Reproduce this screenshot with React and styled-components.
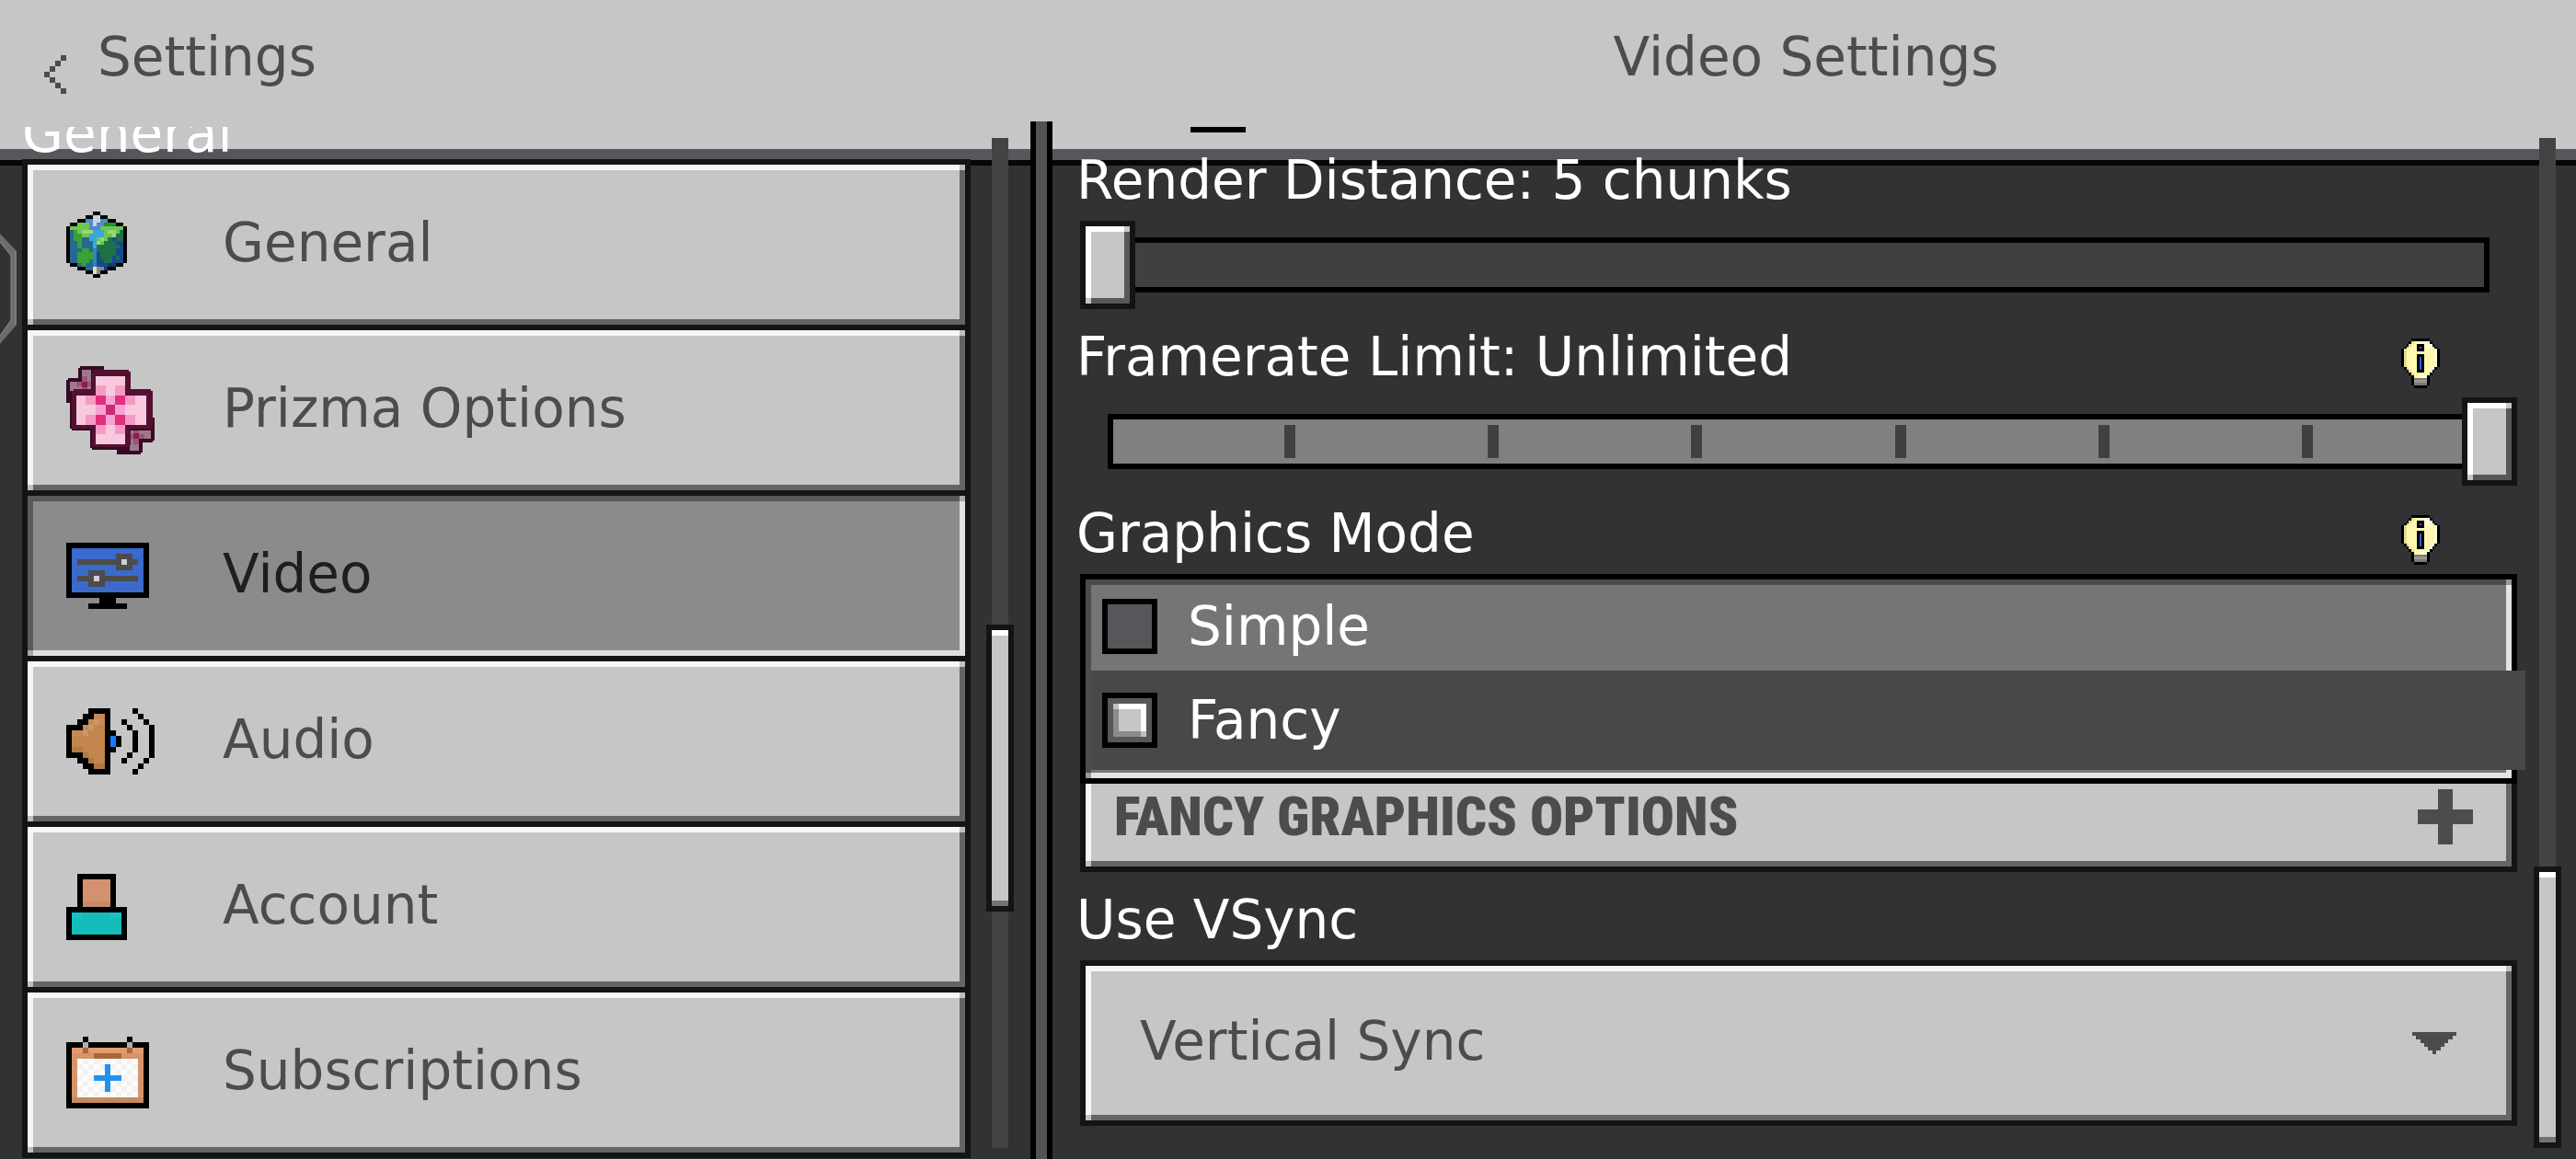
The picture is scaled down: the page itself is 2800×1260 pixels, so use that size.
import React, { useState } from "react"
import styled, { createGlobalStyle, css } from "styled-components"


const GlobalStyle = createGlobalStyle`
    * {
        box-sizing: border-box;
    }

    body {
        margin: 0;
        background: #313233;
        color: #ffffff;
        font-family: "DejaVu Sans", Verdana, sans-serif;
        font-size: 58px;
        line-height: 68px;
    }

    button, input, select {
        margin: 0;
        padding: 0;
        border: 0;
        border-radius: 0;
        background: none;
        color: inherit;
        font: inherit;
        text-align: left;
        appearance: none;
    }
`

// flat face with a hard 6px bevel and blended corners
const bevel = (face, light, dark, corner) => css`
    background:
        linear-gradient(${corner}, ${corner}) 0 100% / 6px 6px no-repeat,
        linear-gradient(${corner}, ${corner}) 100% 0 / 6px 6px no-repeat,
        linear-gradient(${light}, ${light}) 0 0 / 6px 100% no-repeat,
        linear-gradient(${dark}, ${dark}) 100% 0 / 6px 100% no-repeat,
        linear-gradient(${light}, ${light}) 0 0 / 100% 6px no-repeat,
        linear-gradient(${dark}, ${dark}) 0 100% / 100% 6px no-repeat,
        ${face};
`

const Page = styled.div`
    min-height: 100vh;
    display: flex;
    flex-direction: column;
    overflow: hidden;
`

const Header = styled.header`
    display: flex;
    align-items: flex-start;
    padding: 28px 0 72px;
    background: linear-gradient(#c6c8ca, #c6c8ca) 0 calc(100% - 12px) / 100% 6px no-repeat, #c6c6c6;
    box-shadow: inset 0 -12px #58565a;
    border-bottom: 6px solid #060606;
    color: #4c4c4c;
`

const HeaderLeft = styled.div`
    width: 40%;
    display: flex;
    align-items: flex-start;
    gap: 34px;
    padding-left: 48px;
`

const BackButton = styled.button`
    display: flex;
    padding-top: 32px;
`

const Title = styled.h1`
    margin: 0;
    font-size: 58px;
    font-weight: normal;
`

const PageTitle = styled(Title)`
    flex: 1;
    padding-left: 6px;
    text-align: center;
`

// the scrolled panes run up over the lower edge of the header
const Body = styled.main`
    flex: 1;
    display: flex;
    margin-top: -48px;
`

const NavPane = styled.div`
    width: 40%;
    display: flex;
    gap: 17px;
    padding: 6px 18px 0 24px;
`

const NavColumn = styled.nav`
    flex: 1;
`

const SectionTitle = styled.div`
    display: flex;
    align-items: flex-end;
    height: 35px;
    padding-bottom: 4px;
    overflow: hidden;
    line-height: 48px;
`

const NavList = styled.div`
    display: flex;
    flex-direction: column;
    gap: 6px;
    padding: 6px;
    background: #141414;
`

const NavItem = styled.button`
    display: flex;
    align-items: center;
    height: 174px;
    padding-left: 42px;
    color: ${props => props.$active ? "#1e1e1e" : "#4c4c4c"};
    ${props => props.$active
        ? bevel("#8b8b8b", "#595959", "#e0e0e0", "#aaaaaa")
        : bevel("#c6c6c6", "#f7f7f7", "#656565", "#c0c0c0")}
`

const NavIcon = styled.span`
    display: flex;
    width: 170px;
`

const NavText = styled.span`
    padding-bottom: 4px;
`

const Divider = styled.div`
    width: 24px;
    background: #525154;
    border: solid #000000;
    border-width: 0 6px;
`

const ScrollBar = styled.div`
    display: grid;
    grid-template-rows: ${props => props.$rows};
    width: 30px;
    margin: 12px 0;
    background: linear-gradient(#434343, #434343) 50% 0 / 18px 100% no-repeat;
`

const ScrollThumb = styled.div`
    grid-row: 2;
    border: 6px solid #141414;
    background: #c6c6c6;
    box-shadow: inset 0 6px #ffffff, inset 0 -6px #737373;
`

const SettingsPane = styled.div`
    flex: 1;
    display: flex;
    gap: 18px;
    padding: 6px 16px 0 30px;
`

const Settings = styled.div`
    flex: 1;
`

const ToggleEdge = styled.div`
    width: 60px;
    height: 6px;
    margin-left: 120px;
    background: #000000;
`

const SettingRow = styled.div`
    display: flex;
    align-items: flex-end;
    justify-content: space-between;
    height: 96px;
    padding: 18px 84px 10px 0;
    margin-left: -4px;
`

const InfoButton = styled.button`
    display: flex;
`

const SliderBox = styled.div`
    display: grid;
    align-items: center;

    > * {
        grid-area: 1 / 1;
    }
`

const Slider = styled.input`
    width: 100%;
    height: 96px;
    background:
        linear-gradient(${props => props.$fill}, ${props => props.$fill}) 36px 24px / calc(100% - 72px) 48px no-repeat,
        linear-gradient(#000000, #000000) 30px 18px / calc(100% - 60px) 60px no-repeat;

    &::-webkit-slider-thumb {
        appearance: none;
        width: 60px;
        height: 96px;
        border: 6px solid #141414;
        ${bevel("#c6c6c6", "#ffffff", "#58565a", "#c6c6c6")}
        background-origin: padding-box;
        background-clip: padding-box;
    }
`

const Ticks = styled.div`
    display: flex;
    justify-content: space-between;
    margin: 0 222px;
    pointer-events: none;
`

const Tick = styled.span`
    width: 12px;
    height: 36px;
    background: #404040;
`

const RadioGroup = styled.div`
    padding: 6px 6px 9px;
    border: 6px solid #000000;
    ${bevel("#757575", "#4d4b4d", "#e3e3e3", "#999999")}
    background-origin: padding-box;
`

const RadioRow = styled.label`
    display: flex;
    align-items: center;
    gap: 33px;
    padding: ${props => props.$active ? "20px 12px" : "11px 12px 14px"};
    margin-right: ${props => props.$active ? "-21px" : "0"};
    background: ${props => props.$active ? "#4a474a" : "transparent"};
`

const Radio = styled.input`
    width: 60px;
    height: 60px;
    padding: 6px;
    border: 6px solid #000000;
    background: #58565a;

    &:checked {
        background:
            linear-gradient(#c0c0c0, #c0c0c0) 0 0 / 6px 6px no-repeat,
            linear-gradient(#c0c0c0, #c0c0c0) 100% 100% / 6px 6px no-repeat,
            linear-gradient(#ffffff, #ffffff) 0 0 / 100% 6px no-repeat,
            linear-gradient(#ffffff, #ffffff) 100% 0 / 6px 100% no-repeat,
            linear-gradient(#8b8b8b, #8b8b8b) 0 0 / 6px 100% no-repeat,
            linear-gradient(#8b8b8b, #8b8b8b) 0 100% / 100% 6px no-repeat,
            linear-gradient(#c6c6c6, #c6c6c6) 0 0 / 100% 100% no-repeat;
        background-origin: content-box;
        background-color: #58565a;
    }
`

const ExpandButton = styled.button`
    display: flex;
    align-items: center;
    justify-content: space-between;
    width: 100%;
    height: 96px;
    padding: 0 42px 18px 31px;
    border: solid #141414;
    border-width: 0 6px 6px;
    background:
        linear-gradient(#c0c0c0, #c0c0c0) 0 100% / 6px 6px no-repeat,
        linear-gradient(#f7f7f7, #f7f7f7) 0 0 / 6px 100% no-repeat,
        linear-gradient(#656565, #656565) 100% 0 / 6px 100% no-repeat,
        linear-gradient(#656565, #656565) 0 100% / 100% 6px no-repeat,
        #c6c6c6;
    background-origin: padding-box;
    color: #4c4c4c;
    font-family: "Roboto Condensed", "Liberation Sans Narrow", "DejaVu Sans Condensed", sans-serif;
    font-size: 60px;
    font-weight: 900;
`

const SelectBox = styled.div`
    display: grid;
    align-items: center;
    color: #4c4c4c;

    > * {
        grid-area: 1 / 1;
    }

    > svg {
        justify-self: end;
        margin-right: 66px;
        pointer-events: none;
    }
`

const Select = styled.select`
    width: 100%;
    height: 180px;
    padding: 0 120px 4px 59px;
    border: 6px solid #141414;
    ${bevel("#c6c6c6", "#f7f7f7", "#656565", "#c0c0c0")}
    background-origin: padding-box;
`

const EdgeHandle = styled.svg`
    position: absolute;
    left: 0;
    top: 252px;
`


// each character is one cell, looked up in the palette
const PixelArt = ({ rows, palette, width, height }) => (
    <svg
        width={width}
        height={height}
        viewBox={`0 0 ${rows[0].length} ${rows.length}`}
        preserveAspectRatio="none"
        shapeRendering="crispEdges"
        aria-hidden="true"
    >
        {rows.map((row, y) => row.split("").map((cell, x) => (
            cell !== " " && <rect key={`${x}-${y}`} x={x} y={y} width="1" height="1" fill={palette[cell]} />
        )))}
    </svg>
)

const globe = {
    width: 66,
    height: 72,
    palette: {
        K: "#000000", W: "#c4d8d6", B: "#5488d0", L: "#6cc850", P: "#9cd872", G: "#38a238", D: "#28902c",
        T: "#26688f", C: "#3aa5e0", S: "#2f86b8", F: "#1e7048", N: "#164a8c", M: "#0e3c78", w: "#e0dcd8", g: "#8c8888",
    },
    rows: [
        "       KK       ",
        "     KKWWKK     ",
        "   KKBBWWBBKK   ",
        " KKLLLBWBBDDDKK ",
        "KLLLLLBBBLLLLLLK",
        "KTGLPPPCCCLPPLFK",
        "KTGGLLCCCCLLPFFK",
        "KTGGTTCCLPLFNFFK",
        "KTTGTTTCPLFFFNNK",
        "KTTGTTTCFFFFFFNK",
        "KTTTGGTSFFFFFNNK",
        "KTTGGGGSNFFFFNNK",
        "KTTGGGGSNFFFNFNK",
        "KTTGGGTSNNFFNNNK",
        " KKTGTTSNNNMMKK ",
        "   KKTTwggMKK   ",
        "     KKwgKK     ",
        "       KK       ",
    ],
}

const monitor = {
    width: 90,
    height: 72,
    palette: { K: "#000000", B: "#3a6acb", G: "#4c4c4c", W: "#d0d0d0" },
    rows: [
        "KKKKKKKKKKKKKKK",
        "KBBBBBBBBBBBBBK",
        "KBBBBBBBBGGGBBK",
        "KBGGGGGGGGWGGBK",
        "KBBBBBBBBGGGBBK",
        "KBBBGGGBBBBBBBK",
        "KBGGGWGGGGGGGBK",
        "KBBBGGGBBBBBBBK",
        "KBBBBBBBBBBBBBK",
        "KKKKKKKKKKKKKKK",
        "      KKK      ",
        "    KKKKKKK    ",
    ],
}

const speaker = {
    width: 96,
    height: 72,
    palette: { K: "#000000", L: "#c68a58", P: "#cc9669", T: "#c2854c", D: "#b07a46", B: "#1a78ff" },
    rows: [
        "    KKKK    K   ",
        "   KKLLK     K  ",
        "  KKLPLK  K   K ",
        "KKKLPTTK   K   K",
        "KLLPTTTKK   K  K",
        "KTTTTTTKBK  K  K",
        "KTTTTTTKBK  K  K",
        "KDDTTTTKK   K  K",
        "KKKDTTTK   K   K",
        "  KKDTTK  K   K ",
        "   KKDDK     K  ",
        "    KKKK    K   ",
    ],
}

const person = {
    width: 66,
    height: 72,
    palette: { K: "#000000", S: "#d4916e", s: "#c88a68", T: "#16c4c2", t: "#14bcba" },
    rows: [
        "  KKKKKKK  ",
        "  KSSSSSK  ",
        "  KSSSSSK  ",
        "  KSSSSSK  ",
        "  KSSSSSK  ",
        "  KsssssK  ",
        "KKKKKKKKKKK",
        "KTTtttttTTK",
        "KtttttttttK",
        "KtttttttttK",
        "KtttttttttK",
        "KKKKKKKKKKK",
    ],
}

const calendar = {
    width: 90,
    height: 78,
    palette: {
        K: "#000000", g: "#b0aeac", L: "#e49c6c", b: "#a8683a", O: "#d6946a", o: "#c68a62",
        W: "#fcfcfc", w: "#f2f2f2", B: "#2490f0",
    },
    rows: [
        "   K       K   ",
        "KKKgKKKKKKKgKKK",
        "KLLbLLLLLLLbLLK",
        "KOOOObbbbbOOOOK",
        "KOWwWwWwWwWwWOK",
        "KOwWwWwBwWwWwOK",
        "KOWwWwWBWwWwWOK",
        "KOwWwBBBBBwWwOK",
        "KOWwWwWBWwWwWOK",
        "KOwWwWwBwWwWwOK",
        "KOWwWwWwWwWwWOK",
        "KoooooooooooooK",
        "KKKKKKKKKKKKKKK",
    ],
}

const bulb = {
    width: 42,
    height: 54,
    palette: {
        K: "#000000", Y: "#fff9b0", D: "#e6dc8c", W: "#fffde0", B: "#3a5acb", g: "#9a9696", d: "#7c7a70",
    },
    rows: [
        "    KKKKKKK    ",
        "   KDYYYYWWK   ",
        "  KDYYKKKWWWK  ",
        " KDYYYKBKWWYYK ",
        "KDYYYYKKKYYYYWK",
        "KDYYYYYYYYYYYWK",
        "KDYYYYKKKYYYYWK",
        "KDYYYYKBKYYYYWK",
        "KDYYYYKBKYYYYWK",
        "KDYYYYKBKYYYYWK",
        "KDYYYYKBKYYYYWK",
        " KDYYYKBKYYYWK ",
        "  KDYYKKKYYWK  ",
        "   KDYYYYYWK   ",
        "    KYYYWWK    ",
        "    KdddddK    ",
        "    KgggggK    ",
        "    KdddddK    ",
        "     KKKKK     ",
    ],
}

const chevron = {
    width: 24,
    height: 42,
    palette: { K: "#4c4c4c" },
    rows: ["   K", "  K ", " K  ", "K   ", " K  ", "  K ", "   K"],
}

const Petal = () => (
    <>
        <path d="M13 2h2V0h26v40H0V15h2v-2h11z" fill="#350a22" />
        <path d="M17 4h10v23H4V17h13z" fill="#9c7a8c" />
        <path d="M17 11h6v6h-6zM11 17h6v5h-6zM23 17h4v5h-4zM17 22h6v5h-6z" fill="#9c5478" />
        <path d="M17 17h6v6h-6z" fill="#8a1e52" />
    </>
)

const Blossom = () => (
    <svg width="96" height="96" viewBox="0 0 96 96" shapeRendering="crispEdges" aria-hidden="true">
        <Petal />
        <g transform="rotate(180 48 48)"><Petal /></g>
        <path d="M26 25h42v66H28v-2h-2zM4 27h88v43H6v-2H4z" fill="#350a22" />
        <path d="M28 6h2V4h38v2h2v19h22v2h2v39h-2v2H70v18h-2v2H28V68H6V27h2v-2h20z" fill="#541033" />
        <path d="M32 11h32v21h23v32H64v21H32V64H11V32h21z" fill="#fac8dc" />
        <path d="M32 21h11v11H32zM53 21h11v11H53zM21 32h11v10H21zM21 53h11v11H21zM64 32h11v10H64zM64 53h11v11H64zM32 64h11v10H32zM53 64h11v10H53z" fill="#f59ac6" />
        <path d="M43 32h10v32H43zM32 42h32v11H32z" fill="#f6a2d4" />
        <path d="M32 32h11v10H32zM53 32h11v10H53zM32 53h11v11H32zM53 53h11v11H53z" fill="#e0307a" />
        <path d="M43 42h10v11H43z" fill="#c82c6c" />
    </svg>
)

const navItems = [
    { name: "General", icon: <PixelArt {...globe} /> },
    { name: "Prizma Options", icon: <Blossom /> },
    { name: "Video", icon: <PixelArt {...monitor} /> },
    { name: "Audio", icon: <PixelArt {...speaker} /> },
    { name: "Account", icon: <PixelArt {...person} /> },
    { name: "Subscriptions", icon: <PixelArt {...calendar} /> },
]

const App = () => {
    const [section, setSection] = useState("Video")
    const [distance, setDistance] = useState(5)
    const [framerate, setFramerate] = useState(7)
    const [mode, setMode] = useState("Fancy")

    return (
        <Page>
            <GlobalStyle />
            <Header>
                <HeaderLeft>
                    <BackButton aria-label="Back"><PixelArt {...chevron} /></BackButton>
                    <Title as="div">Settings</Title>
                </HeaderLeft>
                <PageTitle>{section} Settings</PageTitle>
            </Header>

            <Body>
                <NavPane>
                    <NavColumn>
                        <SectionTitle>General</SectionTitle>
                        <NavList>
                            {navItems.map(item => (
                                <NavItem
                                    key={item.name}
                                    $active={item.name === section}
                                    onClick={() => setSection(item.name)}
                                >
                                    <NavIcon>{item.icon}</NavIcon>
                                    <NavText>{item.name}</NavText>
                                </NavItem>
                            ))}
                        </NavList>
                    </NavColumn>
                    <ScrollBar $rows="529fr 312fr 257fr"><ScrollThumb /></ScrollBar>
                </NavPane>

                <Divider />

                <SettingsPane>
                    <Settings>
                        <ToggleEdge />
                        <SettingRow>
                            <label htmlFor="distance">Render Distance: {distance} chunks</label>
                        </SettingRow>
                        <SliderBox>
                            <Slider
                                id="distance"
                                type="range"
                                min="5"
                                max="96"
                                $fill="#404040"
                                value={distance}
                                onChange={e => setDistance(Number(e.target.value))}
                            />
                        </SliderBox>

                        <SettingRow>
                            <label htmlFor="framerate">
                                Framerate Limit: {framerate === 7 ? "Unlimited" : (framerate + 1) * 30}
                            </label>
                            <InfoButton aria-label="About framerate limit"><PixelArt {...bulb} /></InfoButton>
                        </SettingRow>
                        <SliderBox>
                            <Slider
                                id="framerate"
                                type="range"
                                min="0"
                                max="7"
                                $fill="#808080"
                                value={framerate}
                                onChange={e => setFramerate(Number(e.target.value))}
                            />
                            <Ticks>
                                {[1, 2, 3, 4, 5, 6].map(n => <Tick key={n} />)}
                            </Ticks>
                        </SliderBox>

                        <SettingRow>
                            <span id="graphics-mode">Graphics Mode</span>
                            <InfoButton aria-label="About graphics mode"><PixelArt {...bulb} /></InfoButton>
                        </SettingRow>
                        <RadioGroup role="radiogroup" aria-labelledby="graphics-mode">
                            {["Simple", "Fancy"].map(name => (
                                <RadioRow key={name} $active={name === mode}>
                                    <Radio
                                        type="radio"
                                        name="mode"
                                        checked={name === mode}
                                        onChange={() => setMode(name)}
                                    />
                                    {name}
                                </RadioRow>
                            ))}
                        </RadioGroup>
                        <ExpandButton>
                            FANCY GRAPHICS OPTIONS
                            <svg width="60" height="60" viewBox="0 0 60 60" aria-hidden="true">
                                <path d="M22 0h16v22h22v16H38v22H22V38H0V22h22z" fill="#4c4c4c" />
                            </svg>
                        </ExpandButton>

                        <SettingRow>
                            <label htmlFor="vsync">Use VSync</label>
                        </SettingRow>
                        <SelectBox>
                            <Select id="vsync" defaultValue="Vertical Sync">
                                <option>Vertical Sync</option>
                                <option>Off</option>
                            </Select>
                            <svg width="48" height="24" viewBox="0 0 48 24" shapeRendering="crispEdges" aria-hidden="true">
                                <path d="M0 0h48v4h-4v4h-5v4h-4v4h-4v4h-5v4h-4v-4h-5v-4h-4v-4H9V8H4V4H0z" fill="#4c4c4c" />
                            </svg>
                        </SelectBox>
                    </Settings>
                    <ScrollBar $rows="792fr 306fr 0fr"><ScrollThumb /></ScrollBar>
                </SettingsPane>
            </Body>
            <EdgeHandle width="20" height="126" viewBox="0 0 20 126" aria-hidden="true">
                <path d="M0 2 18 21v80L0 122v-9l12-17V26L0 11z" fill="#6b6c6e" />
                <path d="M0 11 12 26v70L0 113M17 21v80" fill="none" stroke="#8a8b8d" strokeWidth="1" />
            </EdgeHandle>
        </Page>
    )
}

export default App
